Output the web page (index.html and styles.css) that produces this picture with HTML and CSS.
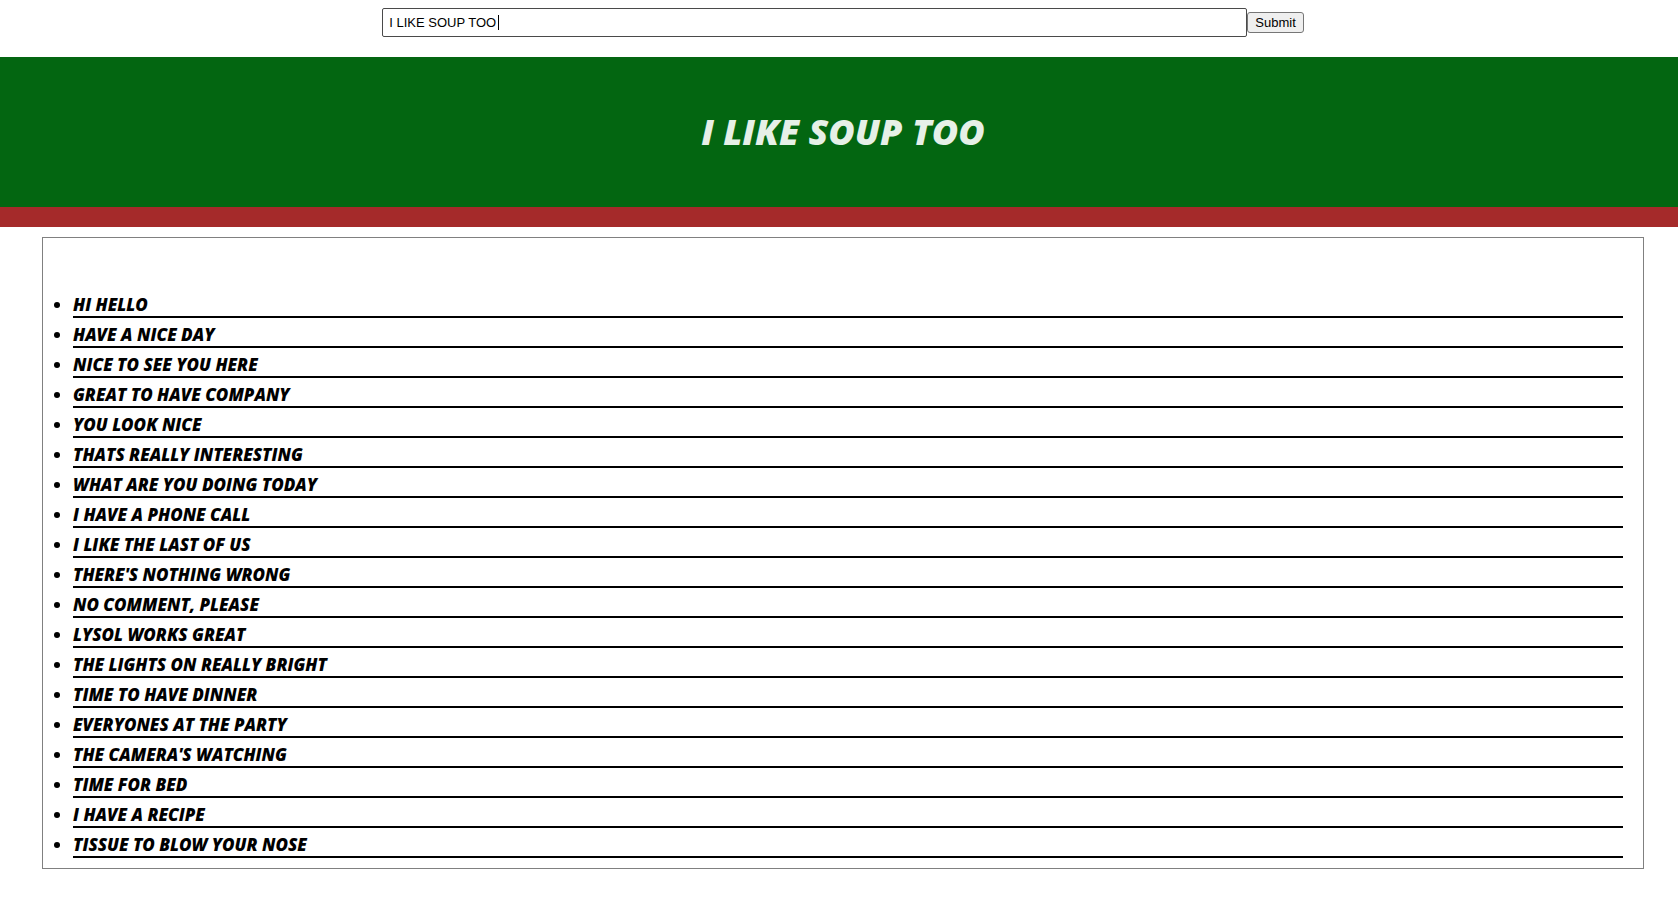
FILE: index.html
```html
<!DOCTYPE html>
<html lang="en">
<head>
<meta charset="utf-8">
<title>Messages</title>
<link rel="stylesheet" href="styles.css">
</head>
<body>
<form class="entry">
  <div class="entry-field">
    <input class="entry-text" type="text" aria-label="Message" value="I LIKE SOUP TOO">
    <span class="entry-caret" aria-hidden="true"></span>
  </div>
  <button class="entry-submit" type="submit">Submit</button>
</form>
<header class="banner">
  <h1 class="banner-title">I LIKE SOUP TOO</h1>
</header>
<main>
  <ul class="messages">
    <li>HI HELLO</li>
    <li>HAVE A NICE DAY</li>
    <li>NICE TO SEE YOU HERE</li>
    <li>GREAT TO HAVE COMPANY</li>
    <li>YOU LOOK NICE</li>
    <li>THATS REALLY INTERESTING</li>
    <li>WHAT ARE YOU DOING TODAY</li>
    <li>I HAVE A PHONE CALL</li>
    <li>I LIKE THE LAST OF US</li>
    <li>THERE'S NOTHING WRONG</li>
    <li>NO COMMENT, PLEASE</li>
    <li>LYSOL WORKS GREAT</li>
    <li>THE LIGHTS ON REALLY BRIGHT</li>
    <li>TIME TO HAVE DINNER</li>
    <li>EVERYONES AT THE PARTY</li>
    <li>THE CAMERA'S WATCHING</li>
    <li>TIME FOR BED</li>
    <li>I HAVE A RECIPE</li>
    <li>TISSUE TO BLOW YOUR NOSE</li>
  </ul>
</main>
</body>
</html>
```

FILE: styles.css
```css
* {
  box-sizing: border-box;
}

body {
  margin: 0;
  background: #fff;
  color: #000;
  font-family: "Open Sans", "Noto Sans", sans-serif;
}

.entry {
  display: flex;
  justify-content: center;
  align-items: center;
  padding: 8px 0 20px 8px;
}

.entry-field {
  position: relative;
  width: 51.8%;
  height: 29px;
}

.entry-text {
  display: block;
  width: 100%;
  height: 100%;
  padding: 0 6px;
  border: 1px solid #4a4a4a;
  border-radius: 2px;
  outline: none;
  font: 13px "Liberation Sans", Arial, sans-serif;
}

.entry-caret {
  position: absolute;
  top: 7px;
  left: 116px;
  width: 1px;
  height: 15px;
  background: #000;
}

.entry-text:focus + .entry-caret {
  display: none;
}

.entry-submit {
  height: 21px;
  padding: 0 7px;
  border: 1px solid #767676;
  border-radius: 3px;
  background: #efefef;
  color: #000;
  font: 13px "Liberation Sans", Arial, sans-serif;
}

.banner {
  padding: 50px 0 50px 8px;
  border-bottom: 20px solid #a52a2a;
  background: #036611;
  text-align: center;
}

.banner-title {
  margin: 0;
  color: #e6f0e7;
  font-size: 36px;
  font-style: italic;
  font-weight: 800;
  line-height: 50px;
}

.messages {
  margin: 10px 34px 46px 42px;
  padding: 50px 20px 10px 30px;
  border: 1px solid gray;
  font-size: 17px;
  font-style: italic;
  font-weight: 800;
}

.messages li {
  padding-top: 6px;
  border-bottom: 2px solid #000;
  line-height: 22px;
}
```
